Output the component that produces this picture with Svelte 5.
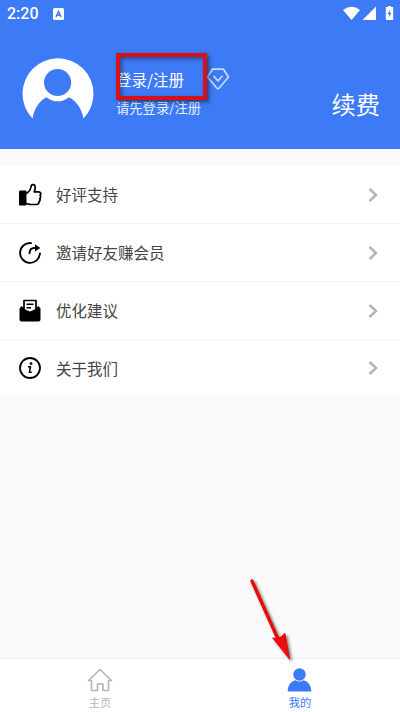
<script lang="ts">
  type Icon = 'like' | 'share' | 'mail' | 'info';

  const rows: { icon: Icon; label: string }[] = [
    { icon: 'like', label: '好评支持' },
    { icon: 'share', label: '邀请好友赚会员' },
    { icon: 'mail', label: '优化建议' },
    { icon: 'info', label: '关于我们' },
  ];

  let tab = $state('mine');
</script>

<div class="screen">
  <header>
    <div class="status">
      <span class="time">2:20</span>
      <svg class="app" width="11" height="12" viewBox="0 0 11 12">
        <rect width="11" height="12" rx="1.5" fill="#fff" />
        <path d="M3 9 5.5 3.2 8 9M3.9 7.2h3.2" fill="none" stroke="#3d7af5" stroke-width="1.4" />
      </svg>
      <span class="fill"></span>
      <svg width="51" height="16" viewBox="0 0 51 16" fill="#fff">
        <path d="M0 4Q8.5-2.5 17 4L8.5 14Z" />
        <path d="M33 .5V14H19.5Z" />
        <path d="M43.5 1h1.5V0h3v1H49.5q.7 0 .7.7V13.3q0 .7-.7.7h-6q-.7 0-.7-.7V1.7q0-.7.7-.7Z" />
        <path d="M47.3 3.5 44.5 8H46.2L45.5 11.7 48.4 7H46.7Z" fill="#3d7af5" />
      </svg>
    </div>

    <div class="profile">
      <svg class="avatar" width="72" height="72" viewBox="0 0 72 72">
        <path fill="#fff" d="M10.5 60.5A35.5 35.5 0 1 1 61.5 60.5C59.5 50 54 42.5 47 39.2A17.3 17.3 0 0 1 24.5 39.2C17.5 42.5 12.5 50 10.5 60.5Z" />
        <circle cx="35.6" cy="24.5" r="13.6" fill="#3d7af5" />
      </svg>
      <div class="who">
        <div class="name">
          <span>登录/注册</span>
          <svg width="24" height="22" viewBox="0 0 24 22" fill="none" stroke="#c9dcff" stroke-width="1.7" stroke-linejoin="round" stroke-linecap="round">
            <path d="M6.5 1.2H17.5L22.5 9 13.2 20Q12 21.2 10.8 20L1.5 9Z" />
            <path d="M8 8.3 12 13 16 8.3" />
          </svg>
          <i class="mark"></i>
        </div>
        <div class="hint">请先登录/注册</div>
      </div>
      <div class="renew">续费</div>
    </div>
  </header>

  <main>
    {#each rows as row}
      <div class="row">
        <svg class="icon" width="24" height="24" viewBox="0 0 24 24">
          {#if row.icon === 'like'}
            <rect x="1" y="7.5" width="7.5" height="15" rx="1" />
            <path d="M8 10.5C11 9 12.5 6.5 13 3.8 13.3 .8 17.2 .8 17.2 4.5 17.2 6.3 16.7 7.5 16.2 8.8H20.5C22.9 8.8 23.3 11 22.1 12.2 23 13.2 22.8 14.7 21.8 15.5 22.4 16.7 22 18 20.9 18.7 21.2 20.5 20.2 21.5 18.5 21.5H13C11 21.5 10 20.7 8 20.5" fill="none" stroke="#000" stroke-width="1.7" stroke-linejoin="round" />
          {:else if row.icon === 'share'}
            <path d="M13 2.1A9.9 9.9 0 1 0 21.9 12.5" fill="none" stroke="#000" stroke-width="1.9" stroke-linecap="round" />
            <path d="M11.5 12.2C11.5 8.5 13.5 6.7 18 6.7" fill="none" stroke="#000" stroke-width="2.1" stroke-linecap="round" />
            <path d="M17 3.2 22.3 6.9 17 10.5Z" />
          {:else if row.icon === 'mail'}
            <path d="M3.5 7 12 14 20.5 7 22.5 9.5V20.5Q22.5 22.5 20.5 22.5H3.5Q1.5 22.5 1.5 20.5V9.5Z" />
            <path d="M6 1.5H18V10.8L12 13.5 6 10.8Z" fill="#fff" stroke="#000" stroke-width="1.7" stroke-linejoin="round" />
            <path d="M8.5 5.2H15.5M8.5 8.7H13" fill="none" stroke="#000" stroke-width="1.4" />
          {:else}
            <circle cx="12" cy="12" r="10" fill="none" stroke="#000" stroke-width="1.8" />
            <circle cx="13" cy="7.6" r="1.4" />
            <path d="M10 10.7H12.5L11.4 16.3H13.7" fill="none" stroke="#000" stroke-width="1.6" stroke-linejoin="round" />
          {/if}
        </svg>
        <span class="label">{row.label}</span>
        <svg width="10" height="14" viewBox="0 0 10 14" fill="none" stroke="#b4b4b4" stroke-width="2.5">
          <path d="M1.5 1 8 7 1.5 13" />
        </svg>
      </div>
    {/each}
  </main>

  <nav>
    <button class:on={tab === 'home'} onclick={() => (tab = 'home')}>
      <svg width="26" height="24" viewBox="0 0 26 24" fill="none" stroke="currentColor" stroke-width="1.6" stroke-linejoin="round">
        <path d="M1.5 12.5 13 1.5 24.5 12.5H21.5V22.5H16V16H10.5V22.5H4.5V12.5Z" />
      </svg>
      <span>主页</span>
    </button>
    <button class:on={tab === 'mine'} onclick={() => (tab = 'mine')}>
      <svg width="26" height="24" viewBox="0 0 26 24" fill="currentColor">
        <circle cx="12.5" cy="6.5" r="6.2" />
        <path d="M.7 23.5C.7 16.5 5 13 8.5 12.2Q12.5 14.8 16.5 12.2C20 13 24.3 16.5 24.3 23.5Z" />
      </svg>
      <span>我的</span>
    </button>
  </nav>

  <svg class="arrow" width="60" height="95" viewBox="0 0 60 95">
    <path d="M11 12 37 70" stroke="#e60c0c" stroke-width="3.4" stroke-linecap="round" />
    <path d="M48.7 90.3 31.7 69 36.5 69.5 40.5 67.5 43.9 64.3Z" fill="#f00a0a" stroke="#d81212" stroke-width="1" />
  </svg>
</div>

<style>
  :global(body) {
    margin: 0;
  }

  .screen {
    position: relative;
    display: flex;
    flex-direction: column;
    width: 400px;
    height: 712px;
    overflow: hidden;
    background: #fafafa;
    font-family: 'Noto Sans CJK SC', sans-serif;
  }

  header {
    height: 149px;
    background: #3d7af5;
    color: #fff;
  }

  .status {
    display: flex;
    align-items: center;
    height: 28px;
    padding: 0 6px 0 7px;
  }

  .time {
    width: 46px;
    font: 500 16px/28px Roboto, sans-serif;
  }

  .fill {
    flex: 1;
  }

  .profile {
    display: flex;
    padding: 30px 20px 0 22px;
  }

  .avatar {
    flex: none;
  }

  .who {
    flex: 1;
    padding: 9px 0 0 22px;
  }

  .name {
    position: relative;
    display: flex;
    align-items: center;
    height: 24px;
    gap: 22px;
    font-size: 15.5px;
    white-space: nowrap;
  }

  .mark {
    position: absolute;
    left: 0;
    top: -14px;
    width: 83px;
    height: 39px;
    border: 4px solid #d9101a;
    box-shadow: 2px 2px 4px rgba(0, 0, 0, 0.5), inset 2px 2px 4px rgba(0, 0, 0, 0.4);
  }

  .hint {
    margin-top: 7px;
    font-size: 13.3px;
    line-height: 20px;
    color: #e9f0ff;
  }

  .renew {
    padding-top: 29px;
    font-size: 24.3px;
    line-height: 34px;
  }

  main {
    margin-top: 17px;
    background: #fff;
  }

  .row {
    display: flex;
    align-items: center;
    box-sizing: border-box;
    height: 58px;
    padding: 0 22px 0 18px;
    border-bottom: 1px solid #f4f4f4;
  }

  .row:last-child {
    height: 56px;
    border: 0;
  }

  .label {
    flex: 1;
    padding: 0 0 1px 14px;
    font-size: 15.5px;
    color: #444;
  }

  nav {
    display: flex;
    box-sizing: border-box;
    height: 54px;
    margin-top: auto;
    border-top: 1px solid #ececec;
    background: #fff;
  }

  button {
    display: flex;
    flex: 1;
    flex-direction: column;
    align-items: center;
    padding: 9px 0 0;
    border: 0;
    background: none;
    color: #b5b5b5;
    font: 11.3px/16px 'Noto Sans CJK SC', sans-serif;
  }

  button span {
    margin-top: 2px;
  }

  .on {
    color: #3d7af5;
  }

  .arrow {
    position: absolute;
    left: 241px;
    top: 569px;
    filter: drop-shadow(2px 2px 1.5px rgba(0, 0, 0, 0.5));
  }
</style>
